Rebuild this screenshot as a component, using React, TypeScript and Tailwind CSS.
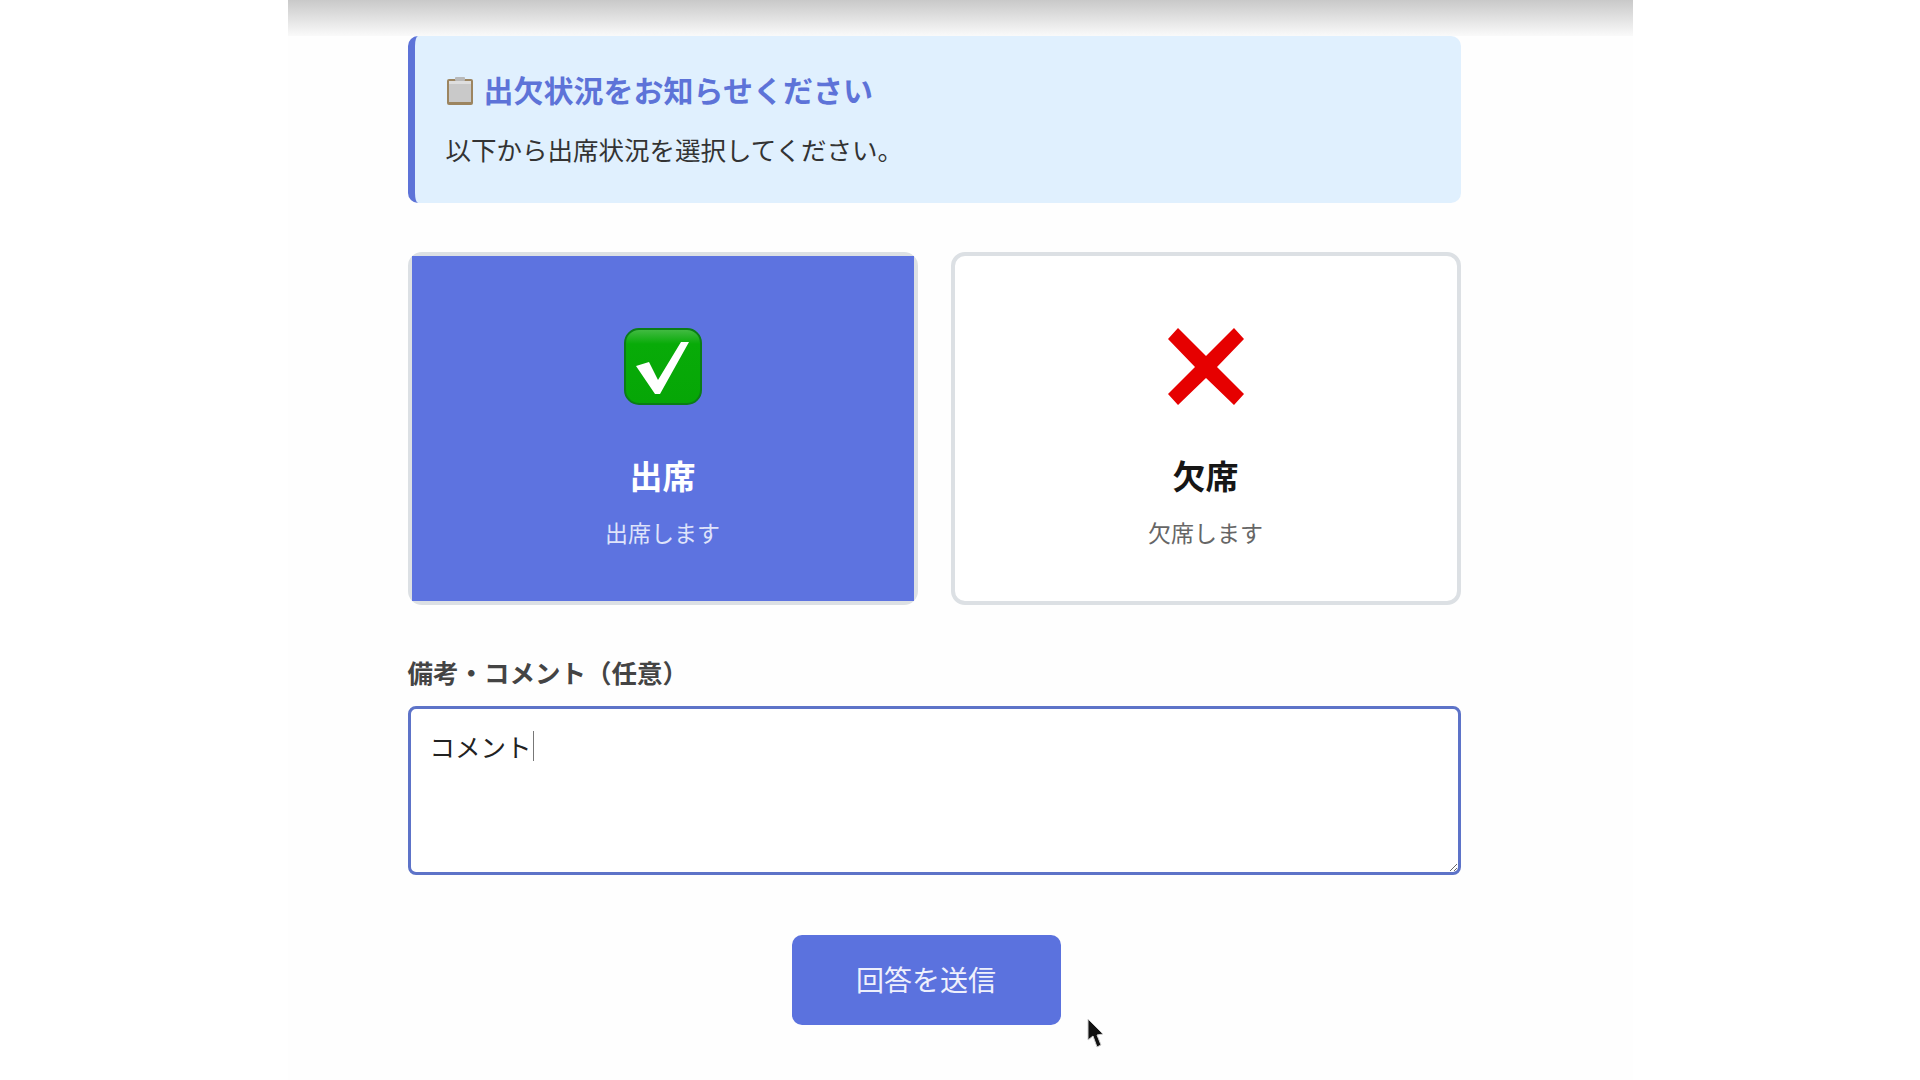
import React from 'react';

const FONT = '"Noto Sans CJK JP", "Noto Sans", sans-serif';

const ClipboardEmoji: React.FC = () => (
  <svg width="28" height="30" viewBox="0 0 28 30" className="mt-[3px] shrink-0">
    <rect x="1" y="3" width="26" height="26" rx="2" fill="#9c8560" />
    <rect x="3" y="5" width="22" height="21" fill="#c9c9c9" />
    <rect x="3" y="5" width="22" height="3" fill="#dedede" />
    <rect x="9" y="1" width="10" height="4" rx="1" fill="#b9b9b9" />
  </svg>
);

const CheckEmoji: React.FC = () => (
  <svg width="78" height="78" viewBox="0 0 78 78">
    <defs>
      <linearGradient id="checkBg" x1="0" y1="0" x2="0" y2="1">
        <stop offset="0" stopColor="#45bb45" />
        <stop offset="0.2" stopColor="#08ab08" />
        <stop offset="1" stopColor="#06a606" />
      </linearGradient>
    </defs>
    <rect x="1" y="1" width="76" height="75" rx="14" fill="url(#checkBg)" stroke="#0a7d16" strokeWidth="2" />
    <path d="M12 38 L25 34 L34 52 L57 14 L65 14 L36 66 L31 66 Z" fill="#ffffff" />
  </svg>
);

const CrossEmoji: React.FC = () => (
  <svg width="78" height="78" viewBox="0 0 78 78">
    <path d="M11 0 L39 28 L67 0 L77 11 L50 39 L77 66 L67 77 L39 50 L11 77 L1 66 L28 39 L1 11 Z" fill="#e60000" />
  </svg>
);

const CursorArrow: React.FC = () => (
  <svg width="20" height="32" viewBox="0 0 20 32" className="absolute left-[1086px] top-[1018px]">
    <path d="M2 1 L2 22 L7 18 L11 29 L15 27 L11 17 L17 16 Z" fill="#111111" stroke="#cfcfcf" strokeWidth="1" />
  </svg>
);

interface ChoiceProps {
  icon: React.ReactNode;
  title: string;
  sub: string;
  selected?: boolean;
}

const Choice: React.FC<ChoiceProps> = ({ icon, title, sub, selected }) => (
  <div className="h-[353px] rounded-[14px] border-4 border-[#dce0e4] bg-white">
    <div className={`flex h-full flex-col items-center ${selected ? 'bg-[#5d73e0]' : ''}`}>
      <div className="mt-[72px] h-[78px]">{icon}</div>
      <div className={`mt-[46px] text-[33px] font-bold leading-[46px] ${selected ? 'text-white' : 'text-[#161616]'}`}>
        {title}
      </div>
      <div className={`mt-[17px] text-[23px] leading-[34px] ${selected ? 'text-[#dfe3fa]' : 'text-[#666666]'}`}>
        {sub}
      </div>
    </div>
  </div>
);

const App: React.FC = () => {
  return (
    <div className="relative h-[1080px] overflow-hidden bg-white" style={{ fontFamily: FONT }}>
      <div className="mx-auto h-[1080px] w-[1345px] bg-[#fefefe]">
        <div className="h-[36px] bg-gradient-to-b from-[#c9c9c9] to-[#fafafa]" />
        <div className="pl-[120px] pr-[172px]">
          <div className="h-[167px] rounded-[10px] border-l-[7px] border-[#5d73d8] bg-[#e0f0fe] pl-[31px]">
            <div className="flex items-center gap-[10px] pt-[32px]">
              <ClipboardEmoji />
              <h2 className="text-[30px] font-bold leading-[42px] text-[#5d73d8]">出欠状況をお知らせください</h2>
            </div>
            <p className="mt-[21px] text-[25.5px] leading-[36px] text-[#333333]">以下から出席状況を選択してください。</p>
          </div>

          <div className="mt-[49px] grid grid-cols-2 gap-[33px]">
            <Choice icon={<CheckEmoji />} title="出席" sub="出席します" selected />
            <Choice icon={<CrossEmoji />} title="欠席" sub="欠席します" />
          </div>

          <label className="mt-[49px] block text-[25.5px] font-bold leading-[35px] text-[#444444]">
            備考・コメント（任意）
          </label>
          <div className="relative mt-[17px]">
            <textarea
              defaultValue="コメント"
              className="block h-[169px] w-full rounded-[8px] border-[3px] border-[#5d73c8] bg-white px-[19px] py-[19px] text-[25.5px] leading-[36px] text-[#222222] outline-none"
              style={{ fontFamily: FONT }}
            />
            <span className="absolute left-[125px] top-[25px] h-[30px] w-px bg-[#777777]" />
          </div>

          <div className="mt-[60px] flex justify-center pr-[16px]">
            <button className="h-[90px] w-[269px] rounded-[10px] bg-[#5b72de] pb-[2px] text-[28px] text-[#eef0fc]">回答を送信</button>
          </div>
        </div>
      </div>
      <CursorArrow />
    </div>
  );
};

export default App;
